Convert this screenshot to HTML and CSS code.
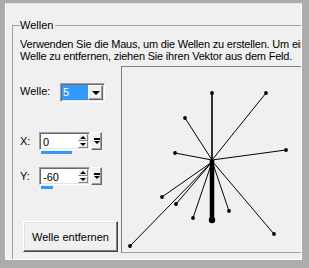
FILE: index.html
```html
<!DOCTYPE html>
<html lang="de">
<head>
    <meta charset="UTF-8">
    <title>Wellen</title>
    <link rel="stylesheet" href="styles.css">
</head>
<body>
    <div class="frame">
        <div class="inner">
            <fieldset class="group">
                <legend>Wellen</legend>
                <p class="hint">Verwenden Sie die Maus, um die Wellen zu erstellen. Um eine<br>Welle zu entfernen, ziehen Sie ihren Vektor aus dem Feld.</p>

                <div class="main">
                    <div class="controls">
                        <!-- Welle -->
                        <div class="row row-welle">
                            <span class="label">Welle:</span>
                            <div class="combo">
                                <span class="combo-value">5</span>
                                <span class="combo-btn"><i class="tri-down"></i></span>
                            </div>
                        </div>

                        <!-- X -->
                        <div class="row row-x">
                            <span class="label label-short">X:</span>
                            <div class="spin-wrap">
                                <div class="spin">
                                    <div class="spin-edit">
                                        <span class="spin-text">0</span>
                                        <span class="spin-arrows">
                                            <span class="arrow-btn"><i class="tri-up small"></i></span>
                                            <span class="arrow-btn"><i class="tri-down small"></i></span>
                                        </span>
                                    </div>
                                    <span class="spin-end"><i class="end-bar"></i><i class="tri-down small"></i></span>
                                </div>
                                <div class="bar" style="width: 31px"></div>
                            </div>
                        </div>

                        <!-- Y -->
                        <div class="row row-y">
                            <span class="label label-short">Y:</span>
                            <div class="spin-wrap">
                                <div class="spin">
                                    <div class="spin-edit">
                                        <span class="spin-text">-60</span>
                                        <span class="spin-arrows">
                                            <span class="arrow-btn"><i class="tri-up small"></i></span>
                                            <span class="arrow-btn"><i class="tri-down small"></i></span>
                                        </span>
                                    </div>
                                    <span class="spin-end"><i class="end-bar"></i><i class="tri-down small"></i></span>
                                </div>
                                <div class="bar" style="width: 12px"></div>
                            </div>
                        </div>

                        <button type="button" class="btn">Welle entfernen</button>
                    </div>

                    <div class="field">
                        <svg width="184" height="185" viewBox="0 0 184 185">
                            <g stroke="#000" stroke-width="1">
                                <line x1="90" y1="93" x2="90" y2="26" stroke-width="1.6"/>
                                <line x1="90" y1="93" x2="144" y2="26"/>
                                <line x1="90" y1="93" x2="63" y2="51"/>
                                <line x1="90" y1="93" x2="53" y2="86"/>
                                <line x1="90" y1="93" x2="164" y2="83"/>
                                <line x1="90" y1="95" x2="40" y2="130"/>
                                <line x1="90" y1="95" x2="54" y2="137"/>
                                <line x1="90" y1="95" x2="71" y2="151"/>
                                <line x1="90" y1="94" x2="107" y2="144"/>
                                <line x1="90" y1="94" x2="152" y2="167"/>
                                <line x1="90" y1="95" x2="8" y2="179"/>
                                <line x1="90" y1="93" x2="90" y2="153" stroke-width="4.5"/>
                            </g>
                            <g fill="#000">
                                <circle cx="90" cy="26" r="1.9"/>
                                <circle cx="144" cy="26" r="1.9"/>
                                <circle cx="63" cy="51" r="1.9"/>
                                <circle cx="53" cy="86" r="1.9"/>
                                <circle cx="164" cy="83" r="1.9"/>
                                <circle cx="40" cy="130" r="1.9"/>
                                <circle cx="54" cy="137" r="1.9"/>
                                <circle cx="71" cy="151" r="1.9"/>
                                <circle cx="107" cy="144" r="1.9"/>
                                <circle cx="152" cy="167" r="1.9"/>
                                <circle cx="8" cy="179" r="1.9"/>
                                <circle cx="90" cy="153" r="3.2"/>
                            </g>
                        </svg>
                    </div>
                </div>
            </fieldset>
        </div>
    </div>
</body>
</html>
```

FILE: styles.css
```css
body {
    margin: 0;
    font-family: 'Liberation Sans', Arial, sans-serif;
    font-size: 11px;
    color: #000;
    background: #f0f0f0;
}

.frame {
    width: 309px;
    height: 268px;
    box-sizing: border-box;
    border-style: solid;
    border-color: #acacac;
    border-width: 3px 7px 8px 5px;
}

.inner {
    height: 100%;
    box-sizing: border-box;
    border: 1px solid #fff;
    border-top-color: #e3e3e3;
    background: #f0f0f0;
    overflow: hidden;
}

.group {
    width: 310px;
    height: 262px;
    box-sizing: border-box;
    margin: 15px 0 0 6px;
    padding: 6px 0 0 7px;
    border: 1px solid #a0a0a0;
}

.group legend {
    padding: 0 2px 0 0;
    line-height: 13px;
}

.hint {
    margin: 0;
    line-height: 12px;
    white-space: nowrap;
    letter-spacing: -0.2px;
}

.main {
    display: flex;
    align-items: flex-start;
    margin-top: 4px;
}

.controls {
    width: 101px;
    display: flex;
    flex-direction: column;
    align-items: flex-start;
    flex-shrink: 0;
}

.row {
    display: flex;
    align-items: flex-start;
}

.row-welle {
    margin-top: 17px;
}

.row-x {
    margin-top: 30px;
}

.row-y {
    margin-top: 13px;
}

.label {
    width: 40px;
    padding-top: 2px;
    line-height: 12px;
}

.label-short {
    width: 19px;
    padding-top: 3px;
}

/* combo box */
.combo {
    display: flex;
    width: 45px;
    height: 19px;
    box-sizing: border-box;
    padding: 1px;
    border: 1px solid;
    border-color: #a0a0a0 #fff #fff #a0a0a0;
    box-shadow: inset 1px 1px 0 #696969, inset -1px -1px 0 #e3e3e3;
    background: #fff;
}

.combo-value {
    flex: 1;
    padding-left: 1px;
    line-height: 15px;
    background: #3399ff;
    color: #fff;
}

.combo-btn {
    width: 15px;
    height: 15px;
    box-sizing: border-box;
    display: flex;
    align-items: center;
    justify-content: center;
    border: 1px solid;
    border-color: #fff #696969 #696969 #fff;
    box-shadow: inset -1px -1px 0 #a0a0a0;
    background: #f0f0f0;
}

.tri-down,
.tri-up {
    display: block;
    width: 0;
    height: 0;
    border-left: 4px solid transparent;
    border-right: 4px solid transparent;
}

.tri-down {
    border-top: 4px solid #000;
}

.tri-up {
    border-bottom: 4px solid #000;
}

.tri-down.small {
    border-left-width: 3px;
    border-right-width: 3px;
    border-top-width: 3px;
}

.tri-up.small {
    border-left-width: 3px;
    border-right-width: 3px;
    border-bottom-width: 3px;
}

/* spin edits */
.spin {
    display: flex;
    height: 18px;
}

.spin-edit {
    display: flex;
    width: 51px;
    height: 18px;
    box-sizing: border-box;
    padding: 1px 1px 1px 3px;
    border: 1px solid;
    border-color: #a0a0a0 #fff #fff #a0a0a0;
    box-shadow: inset 1px 1px 0 #696969, inset -1px -1px 0 #e3e3e3;
    background: #fff;
}

.spin-text {
    flex: 1;
    line-height: 12px;
    padding-top: 2px;
}

.spin-arrows {
    width: 10px;
    display: flex;
    flex-direction: column;
}

.arrow-btn {
    flex: 1;
    display: flex;
    align-items: center;
    justify-content: center;
    box-sizing: border-box;
    border: 1px solid;
    border-color: #fff #808080 #808080 #fff;
    background: #f0f0f0;
}

.spin-end {
    width: 11px;
    margin-left: 1px;
    box-sizing: border-box;
    display: flex;
    flex-direction: column;
    align-items: center;
    justify-content: center;
    gap: 1px;
    border: 1px solid;
    border-color: #fff #696969 #696969 #fff;
    box-shadow: inset -1px -1px 0 #a0a0a0;
    background: #f0f0f0;
}

.end-bar {
    display: block;
    width: 6px;
    height: 2px;
    background: #000;
}

.bar {
    height: 3px;
    margin: 1px 0 0 2px;
    background: #3399ff;
}

/* button */
.btn {
    width: 95px;
    height: 31px;
    margin: 32px 0 0 3px;
    padding: 0;
    font-family: inherit;
    font-size: 11px;
    color: #000;
    background: #f0f0f0;
    border: 1px solid;
    border-color: #fff #404040 #404040 #fff;
    box-shadow: inset -1px -1px 0 #808080, inset 1px 1px 0 #e3e3e3;
}

/* drawing area */
.field {
    width: 186px;
    height: 187px;
    flex-shrink: 0;
    box-sizing: border-box;
    border-top: 1px solid #808080;
    border-left: 1px solid #808080;
    border-bottom: 1px solid #a0a0a0;
    background: #f0f0f0;
}

.field svg {
    display: block;
}
```
